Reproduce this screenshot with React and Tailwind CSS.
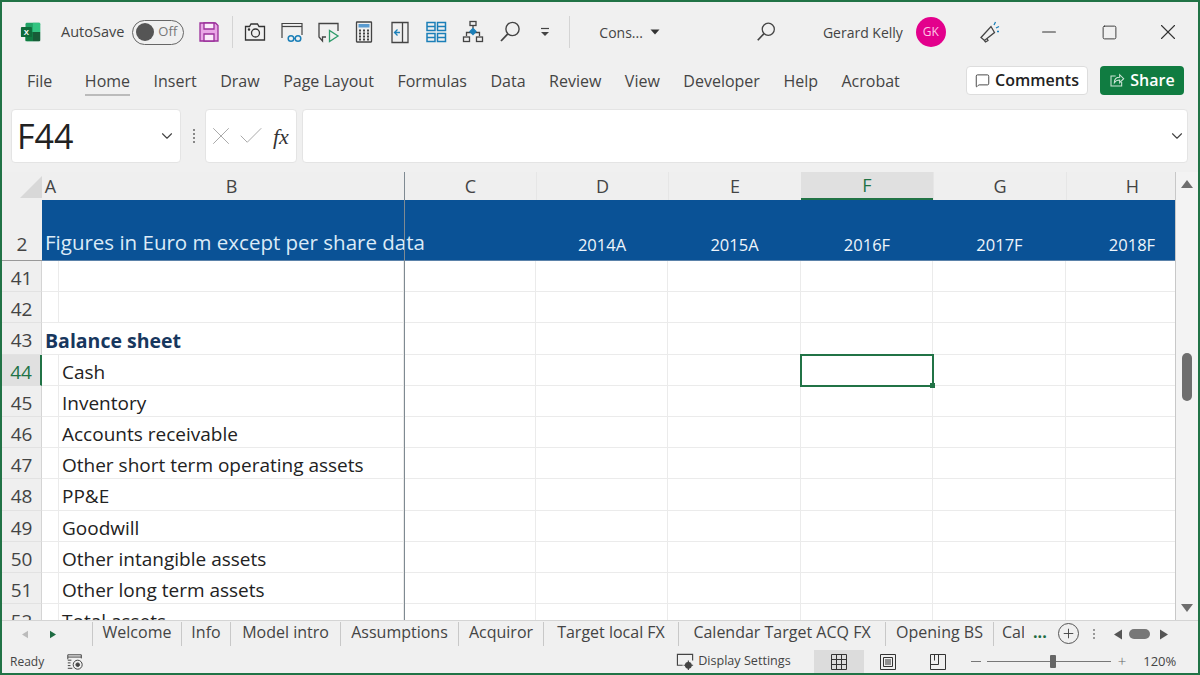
import React from 'react';
import { ChevronDown, Minus, Square, X, Check, MessageSquare, Plus } from 'lucide-react';

const GRID_COLS = 'grid grid-cols-[40px_17px_345px_132px_132px_133px_132px_133px_132px]';
const tabs = ['File', 'Home', 'Insert', 'Draw', 'Page Layout', 'Formulas', 'Data', 'Review', 'View', 'Developer', 'Help', 'Acrobat'];
const sheets = [
  { name: 'Welcome', w: 'w-[89px]' },
  { name: 'Info', w: 'w-[49px]' },
  { name: 'Model intro', w: 'w-[110px]' },
  { name: 'Assumptions', w: 'w-[118px]' },
  { name: 'Acquiror', w: 'w-[85px]' },
  { name: 'Target local FX', w: 'w-[135px]' },
  { name: 'Calendar Target ACQ FX', w: 'w-[207px]' },
  { name: 'Opening BS', w: 'w-[108px]' },
];
const columns = ['C', 'D', 'E', 'F', 'G', 'H'];
const years = ['', '2014A', '2015A', '2016F', '2017F', '2018F'];
const rows = [
  { n: 41, label: '' },
  { n: 42, label: '' },
  { n: 43, label: 'Balance sheet', heading: true },
  { n: 44, label: 'Cash' },
  { n: 45, label: 'Inventory' },
  { n: 46, label: 'Accounts receivable' },
  { n: 47, label: 'Other short term operating assets' },
  { n: 48, label: 'PP&E' },
  { n: 49, label: 'Goodwill' },
  { n: 50, label: 'Other intangible assets' },
  { n: 51, label: 'Other long term assets' },
  { n: 52, label: 'Total assets' },
];

function Search({ className }) {
  return (
    <svg viewBox="0 0 24 24" className={className} fill="none" stroke="#444" strokeWidth="1.4">
      <circle cx="14.5" cy="9" r="6.6" />
      <path d="M9.8 13.8 3 21" strokeWidth="1.8" />
    </svg>
  );
}

function QuickIcons() {
  return (
    <div className="flex items-center">
      <svg viewBox="0 0 24 24" className="w-6 h-6 ml-[10px]" fill="none" stroke="#333" strokeWidth="1.3">
        <path d="M2.5 6.5h4l1.5-2.5h6.5l1.5 2.5h5.5v13.5h-19z" />
        <circle cx="12.5" cy="13" r="4" />
        <circle cx="6" cy="9.5" r="0.6" />
      </svg>
      <svg viewBox="0 0 24 24" className="w-6 h-6 ml-[13px]" fill="none" stroke="#444" strokeWidth="1.2">
        <path d="M2 18V3.5h20V15" />
        <path d="M2 6.5h20" />
        <circle cx="11" cy="18.5" r="2.8" stroke="#1b7fb8" strokeWidth="1.5" />
        <circle cx="18" cy="18.5" r="2.8" stroke="#1b7fb8" strokeWidth="1.5" />
        <path d="M13.8 18.5h1.4" stroke="#1b7fb8" />
      </svg>
      <svg viewBox="0 0 24 24" className="w-6 h-6 ml-[12px]" fill="none" stroke="#444" strokeWidth="1.3">
        <path d="M10 17H6.5v4L3 17V3.5h19V11" />
        <path d="M13.5 10.5v11l8.5-5.5z" stroke="#2e9b6a" />
      </svg>
      <svg viewBox="0 0 24 24" className="w-6 h-6 ml-[12px]" fill="none" stroke="#444" strokeWidth="1.3">
        <rect x="4.5" y="2" width="15" height="20" rx="0.5" />
        <rect x="6.5" y="4" width="11" height="3.5" fill="#5a9bd0" stroke="none" />
        <path d="M7 10.5h10M7 13.5h10M7 16.5h10M7 19.5h10" strokeDasharray="2 2" strokeWidth="1.8" stroke="#444" />
      </svg>
      <svg viewBox="0 0 24 24" className="w-6 h-6 ml-[12px]" fill="none" stroke="#444" strokeWidth="1.3">
        <path d="M4 2.5h16v20H4z" />
        <path d="M14.5 2.5v20" />
        <path d="M12 12.5H7M9.5 9.5l-3 3 3 3" stroke="#1b7fb8" />
      </svg>
      <svg viewBox="0 0 24 24" className="w-6 h-6 ml-[12px]" fill="none" stroke="#1b7fb8" strokeWidth="1.5">
        <rect x="3" y="2.5" width="8" height="8" />
        <rect x="13.5" y="2.5" width="8" height="8" />
        <rect x="3" y="13.5" width="8" height="8" />
        <rect x="13.5" y="13.5" width="8" height="8" />
        <path d="M3 6.5h8M13.5 6.5h8M3 17.5h8M13.5 17.5h8" />
      </svg>
      <svg viewBox="0 0 24 24" className="w-6 h-6 ml-[13px]" fill="none" stroke="#444" strokeWidth="1.3">
        <rect x="9" y="1.5" width="6" height="4" />
        <path d="M12 5.5v3M5.5 16v-3.5h13V16" />
        <rect x="2.5" y="17" width="6" height="4.5" />
        <rect x="15.5" y="17" width="6" height="4.5" />
        <path d="M12 8.5l3 3-3 3-3-3z" fill="#1b7fb8" stroke="#1b7fb8" />
      </svg>
      <Search className="w-6 h-6 ml-[13px]" />
      <svg viewBox="0 0 12 12" className="w-3 h-3 ml-[17px]" fill="none" stroke="#444" strokeWidth="1.2">
        <path d="M2 2.5h8" />
        <path d="M2 6h8l-4 4z" fill="#444" stroke="none" />
      </svg>
    </div>
  );
}

function TitleBar() {
  return (
    <div className="h-[60px] flex items-center text-[14px] text-[#444] shrink-0">
      <svg viewBox="0 0 24 24" className="w-[22px] h-[22px] ml-[18px]">
        <rect x="6" y="2" width="16" height="20" rx="1.5" fill="#21a366" />
        <rect x="14" y="2" width="8" height="10" fill="#33c481" />
        <rect x="6" y="12" width="8" height="10" fill="#107c41" />
        <rect x="14" y="12" width="8" height="10" fill="#185c37" />
        <rect x="1" y="6.5" width="12" height="11" rx="1" fill="#0f6b3a" />
        <text x="7" y="15.5" textAnchor="middle" fontSize="8.5" fontWeight="700" fill="#fff" fontFamily="'Liberation Sans', sans-serif">X</text>
      </svg>
      <span className="ml-[19px] text-[14.5px]">AutoSave</span>
      <div className="ml-[8px] w-[52px] h-[25px] rounded-full border border-[#666] flex items-center px-[2px]">
        <span className="w-[18px] h-[18px] rounded-full bg-[#555] ml-[1px]" />
        <span className="ml-[4px] text-[13px] text-[#777]">Off</span>
      </div>
      <svg viewBox="0 0 24 24" className="w-[24px] h-[24px] ml-[13px]" fill="#e9a6e6" stroke="#9a2f9a" strokeWidth="1.3">
        <path d="M3 3h15.5L21 5.5V21H3z" />
        <path d="M7 3h10v6H7zM7 21v-7h10v7z" fill="#fbeafa" />
      </svg>
      <div className="w-px h-[32px] bg-[#d4d4d4] ml-[11px]" />
      <QuickIcons />
      <div className="w-px h-[32px] bg-[#d4d4d4] ml-[18px]" />
      <span className="ml-[29px]">Cons...</span>
      <svg viewBox="0 0 10 10" className="w-[10px] h-[10px] ml-[7px]"><path d="M0.5 2.5h9L5 7.5z" fill="#333" /></svg>
      <Search className="w-[22px] h-[22px] ml-[95px]" />
      <span className="ml-[46px]">Gerard Kelly</span>
      <span className="ml-[13px] w-[30px] h-[30px] rounded-full bg-[#e3008c] text-[#ffc4e6] text-[12px] flex items-center justify-center">GK</span>
      <svg viewBox="0 0 24 24" className="w-[24px] h-[24px] ml-[31px]" fill="none" stroke="#444" strokeWidth="1.3">
        <path d="M4 17.5 14 6.5l3.5 6-10 8zM7 20l1.5 2 2.5-1.5-1-2" />
        <path d="M17 5l1.5-3M19 8l3-1.500M20 11.5h2" stroke="#1b7fb8" />
      </svg>
      <Minus size={22} strokeWidth={1.2} className="ml-[37px] text-[#333]" />
      <Square size={17} strokeWidth={1.3} className="ml-[41px] text-[#333]" />
      <X size={26} strokeWidth={1} className="ml-[37px] text-[#333]" />
    </div>
  );
}

function RibbonTabs() {
  return (
    <div className="h-[38px] flex items-center text-[16px] text-[#444] shrink-0">
      <div className="flex ml-[25px] gap-[23.5px]">
        {tabs.map((tab) => (
          <span key={tab} className={tab === 'Home' ? 'relative' : tab === 'File' ? 'mr-[9px]' : ''}>
            {tab}
            {tab === 'Home' && <span className="absolute left-0 right-0 bottom-[-3px] h-[2px] bg-[#bbb]" />}
          </span>
        ))}
      </div>
      <div className="ml-auto flex items-center gap-[12px] mr-[14px] -mt-[2px]">
        <button className="h-[29px] w-[122px] bg-white border border-[#ddd] rounded-[4px] flex items-center justify-center gap-[5px] text-[#222]">
          <MessageSquare size={15} strokeWidth={1.3} />
          <span className="font-semibold">Comments</span>
        </button>
        <button className="h-[29px] w-[84px] bg-[#107c41] rounded-[4px] flex items-center justify-center gap-[5px] text-white">
          <svg viewBox="0 0 24 24" className="w-[16px] h-[16px]" fill="none" stroke="#cfe6d8" strokeWidth="1.6">
            <path d="M10 6H3v15h16v-6" />
            <path d="M8 16c0-5 3-8 8-8V4l6 6-6 6v-4c-4 0-6 1-8 4z" />
          </svg>
          <span className="font-semibold">Share</span>
        </button>
      </div>
    </div>
  );
}

function FormulaBar() {
  return (
    <div className="h-[56px] mt-[8px] flex items-stretch gap-[8px] shrink-0 pl-[9px] pr-[10px] py-[1px]">
      <div className="w-[170px] bg-white rounded-[4px] border border-[#e4e4e4] flex items-center pl-[5px] pr-[4px]">
        <span className="text-[34px] text-[#222]">F44</span>
        <ChevronDown size={18} strokeWidth={1.5} className="ml-auto text-[#444]" />
      </div>
      <div className="w-[10px] flex flex-col items-center justify-center gap-[2px] -mr-[2px]">
        <span className="w-[2px] h-[2px] bg-[#888]" />
        <span className="w-[2px] h-[2px] bg-[#888]" />
        <span className="w-[2px] h-[2px] bg-[#888]" />
        <span className="w-[2px] h-[2px] bg-[#888]" />
      </div>
      <div className="w-[92px] bg-white rounded-[4px] border border-[#e4e4e4] flex items-center">
        <X size={30} strokeWidth={0.8} className="text-[#aaa] shrink-0" />
        <Check size={30} strokeWidth={0.8} className="text-[#aaa] shrink-0" />
        <span className="ml-[7px] text-[22px] italic text-[#333] font-['Liberation_Serif',serif]">fx</span>
      </div>
      <div className="flex-1 -ml-[3px] bg-white rounded-[4px] border border-[#e4e4e4] flex items-center justify-end pr-[1px]">
        <ChevronDown size={18} strokeWidth={1.5} className="text-[#444]" />
      </div>
    </div>
  );
}

function Sheet() {
  return (
    <div className="relative h-[448px] mt-[8px] shrink-0 flex overflow-hidden">
      <div className="w-[1173px] shrink-0 flex flex-col overflow-hidden">
        <div className={`${GRID_COLS} h-[28px] shrink-0 bg-[#efefef] text-[18px] leading-none text-[#444]`}>
          <div className="flex items-end justify-end">
            <span className="w-0 h-0 border-b-[22px] border-l-[22px] border-b-[#d8d8d8] border-l-transparent mb-[2px]" />
          </div>
          <div className="flex items-center justify-center">A</div>
          <div className="flex items-center justify-center">B</div>
          {columns.map((c) => (
            <div key={c} className={c === 'F'
              ? 'flex items-center justify-center bg-[#e0e0e0] border-b-2 border-[#217346] text-[#217346]'
              : 'flex items-center justify-center border-l border-[#e6e6e6]'}>{c}</div>
          ))}
        </div>
        <div className={`${GRID_COLS} h-[61px] shrink-0`}>
          <div className="bg-[#efefef] border-b border-[#999] flex items-end justify-center pb-[2px] text-[19px] text-[#444]">2</div>
          <div className="relative z-10 col-span-2 bg-[#0a5296] border-b border-[#5b82aa] flex items-end pb-[2px] pl-[3px] text-[#dcebf7] text-[20.5px] whitespace-nowrap">Figures in Euro m except per share data</div>
          {years.map((y) => (
            <div key={y} className="bg-[#0a5296] border-b border-[#5b82aa] flex items-end justify-center pb-[2px] text-[#eef5fb] text-[16.5px]">{y}</div>
          ))}
        </div>
        {rows.map((row) => (
          <div key={row.n} className={`${GRID_COLS} h-[31.2px] shrink-0 leading-none`}>
            <div className={row.n === 44
              ? 'bg-[#e0e0e0] border-r-2 border-[#217346] border-b border-b-[#e0e0e0] text-[#217346] text-[19px] flex items-center justify-center pt-[5px]'
              : 'bg-[#efefef] border-r border-b border-r-[#d4d4d4] border-b-[#e2e2e2] text-[#444] text-[19px] flex items-center justify-center pt-[5px]'}>{row.n}</div>
            {row.heading ? (
              <div className="col-span-2 bg-white border-b border-r border-[#ebebeb] pl-[3px] pt-[4px] flex items-center text-[19.5px] font-bold text-[#17375e] whitespace-nowrap">{row.label}</div>
            ) : (
              <>
                <div className="bg-white border-r border-b border-[#ebebeb]" />
                <div className="bg-white border-b border-r border-[#ebebeb] pl-[3px] pt-[5px] flex items-center text-[19px] text-[#222] whitespace-nowrap">{row.label}</div>
              </>
            )}
            {columns.map((c) => (
              <div key={c} className={row.n === 44 && c === 'F'
                ? 'relative -m-px bg-white border-2 border-[#217346] z-10'
                : 'bg-white border-r border-b border-[#ebebeb]'}>
                {row.n === 44 && c === 'F' && <span className="absolute -right-[3px] -bottom-[3px] w-[5px] h-[5px] bg-[#217346]" />}
              </div>
            ))}
          </div>
        ))}
      </div>
      <div className="flex-1 bg-[#f3f3f3] border-l border-[#c8c8c8] flex flex-col items-center pt-[8px] pb-[8px]">
        <svg viewBox="0 0 12 8" className="w-[12px] h-[8px]"><path d="M6 0l6 8H0z" fill="#6e6e6e" /></svg>
        <span className="w-[10px] h-[48px] rounded-full bg-[#6e6e6e] mt-[165px]" />
        <svg viewBox="0 0 12 8" className="w-[12px] h-[8px] mt-auto"><path d="M6 8l6-8H0z" fill="#6e6e6e" /></svg>
      </div>
      <div className="absolute left-[402px] top-0 bottom-0 w-px bg-[#7f8a92] z-20" />
    </div>
  );
}

function SheetTabs() {
  return (
    <div className="h-[27px] border-t border-[#d4d4d4] bg-[#f0f0f0] flex items-center text-[16px] text-[#444] shrink-0 whitespace-nowrap">
      <svg viewBox="0 0 8 10" className="w-[6px] h-[9px] ml-[20px]"><path d="M8 0v10L0 5z" fill="#bbb" /></svg>
      <svg viewBox="0 0 8 10" className="w-[6px] h-[9px] ml-[22px]"><path d="M0 0v10l8-5z" fill="#1e6b42" /></svg>
      <div className="flex ml-[36px] items-center">
        {sheets.map((s) => (
          <span key={s.name} className={`${s.w} h-[24px] flex items-center justify-center border-l border-[#c8c8c8] pb-[4px]`}>{s.name}</span>
        ))}
        <span className="h-[24px] w-[31px] flex items-center border-l border-[#c8c8c8] pl-[8px] pb-[4px] overflow-hidden">Cal</span>
      </div>
      <span className="font-bold text-[#1e6b42] ml-[9px] pb-[4px]">...</span>
      <span className="ml-[11px] w-[21px] h-[21px] rounded-full border border-[#555] flex items-center justify-center -mt-[1px]">
        <Plus size={15} strokeWidth={1.5} />
      </span>
      <div className="ml-[1px] w-[29px] flex flex-col items-center gap-[2px]">
        <span className="w-[2px] h-[2px] bg-[#999]" />
        <span className="w-[2px] h-[2px] bg-[#999]" />
        <span className="w-[2px] h-[2px] bg-[#999]" />
      </div>
      <svg viewBox="0 0 8 10" className="w-[8px] h-[11px] ml-[5px]"><path d="M8 0v10L0 5z" fill="#555" /></svg>
      <span className="ml-[7px] w-[21px] h-[10px] rounded-full bg-[#777]" />
      <svg viewBox="0 0 8 10" className="w-[8px] h-[11px] ml-[10px]"><path d="M0 0v10l8-5z" fill="#555" /></svg>
    </div>
  );
}

function StatusBar() {
  return (
    <div className="flex-1 bg-[#f0f0f0] flex items-center text-[12px] text-[#444] whitespace-nowrap pt-[3px]">
      <span className="ml-[8px]">Ready</span>
      <svg viewBox="0 0 20 20" className="w-[18px] h-[18px] ml-[22px]" fill="none" stroke="#444" strokeWidth="1.1">
        <path d="M2 7V2h15v4M2 4.5h15M2 8h4M2 11h3M2 14h3M2 17h5" />
        <circle cx="13" cy="13" r="5" />
        <circle cx="13" cy="13" r="2" fill="#444" />
      </svg>
      <svg viewBox="0 0 20 20" className="w-[19px] h-[19px] ml-[592px]" fill="none" stroke="#444" strokeWidth="1.2">
        <path d="M7 14H1.5V2.5h16V9" />
        <circle cx="13" cy="14" r="3" fill="#444" />
        <path d="M13 9v10M8 14h10" />
      </svg>
      <span className="ml-[3px] text-[12.6px]">Display Settings</span>
      <div className="ml-[23px] w-[50px] h-[23px] bg-[#dcdcdc] flex items-center justify-center">
        <svg viewBox="0 0 16 16" className="w-[16px] h-[16px]" fill="none" stroke="#333" strokeWidth="1"><path d="M.5.5h15v15H.5zM5.5.5v15M10.5.5v15M.5 5.5h15M.5 10.5h15" /></svg>
      </div>
      <svg viewBox="0 0 16 16" className="w-[16px] h-[16px] ml-[16px]" fill="none" stroke="#333" strokeWidth="1"><path d="M.5.5h15v15H.5zM3.5 3.5h9v9h-9zM5 6h6M5 8h6M5 10h6" /></svg>
      <svg viewBox="0 0 16 16" className="w-[16px] h-[16px] ml-[34px]" fill="none" stroke="#333" strokeWidth="1"><path d="M.5.5h15v15H.5zM.5 10.5h8v-10M4.5.5v6" /></svg>
      <span className="ml-[25px] w-[10px] h-px bg-[#777]" />
      <div className="relative ml-[6px] w-[124px] h-px bg-[#777]">
        <span className="absolute left-[63px] -top-[6px] w-[6px] h-[13px] bg-[#666] rounded-[1px]" />
      </div>
      <span className="ml-[7px] text-[15px] font-light text-[#666]">+</span>
      <span className="ml-[17px] text-[13px]">120%</span>
    </div>
  );
}

export default function App() {
  return (
    <div className="w-[1200px] h-[675px] overflow-hidden border-2 border-[#217346] bg-[#f0f0f0] flex flex-col font-['Open_Sans',sans-serif]">
      <TitleBar />
      <RibbonTabs />
      <FormulaBar />
      <Sheet />
      <SheetTabs />
      <StatusBar />
    </div>
  );
}
